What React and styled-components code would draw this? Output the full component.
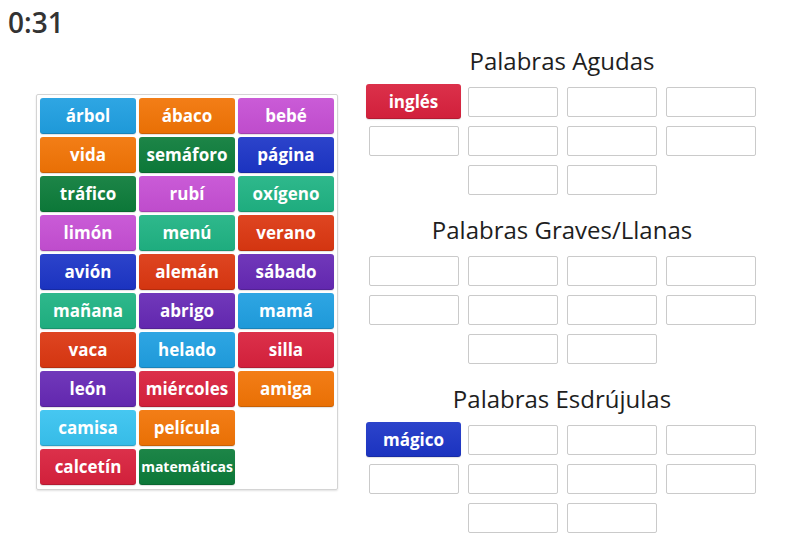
import React from "react";
import styled, { createGlobalStyle } from "styled-components";

const GlobalStyle = createGlobalStyle`
  html, body {
    margin: 0;
    padding: 0;
    background: #fff;
    font-family: "Open Sans", "Liberation Sans", sans-serif;
    color: #222;
  }
  * { box-sizing: border-box; }
`;

const palette = {
  sky: "#1f9fe1",
  orange: "#f27405",
  pink: "#c64fd4",
  green: "#0c7c3a",
  blue: "#1c35c7",
  teal: "#1fb383",
  rust: "#dc3711",
  purple: "#6629b5",
  red: "#d9213d",
  cyan: "#38c3f0",
};

const words = [
  ["árbol", "sky"], ["ábaco", "orange"], ["bebé", "pink"],
  ["vida", "orange"], ["semáforo", "green"], ["página", "blue"],
  ["tráfico", "green"], ["rubí", "pink"], ["oxígeno", "teal"],
  ["limón", "pink"], ["menú", "teal"], ["verano", "rust"],
  ["avión", "blue"], ["alemán", "rust"], ["sábado", "purple"],
  ["mañana", "teal"], ["abrigo", "purple"], ["mamá", "sky"],
  ["vaca", "rust"], ["helado", "sky"], ["silla", "red"],
  ["león", "purple"], ["miércoles", "red"], ["amiga", "orange"],
  ["camisa", "cyan"], ["película", "orange"],
  ["calcetín", "red"], ["matemáticas", "green"],
];

const groups = [
  { title: "Palabras Agudas", placed: { word: "inglés", color: "red" } },
  { title: "Palabras Graves/Llanas" },
  { title: "Palabras Esdrújulas", placed: { word: "mágico", color: "blue" } },
];

const Header = styled.header`
  padding: 8px 0 0 8px;
  height: 36px;
`;

const Timer = styled.div`
  font-size: 28px;
  line-height: 28px;
  font-weight: 600;
  color: #333;
`;

const Main = styled.main`
  display: flex;
  align-items: center;
  gap: 26px;
  padding: 10px 0 0 36px;
`;

const WordBank = styled.div`
  width: 302px;
  padding: 3px 3px 4px;
  border: 1px solid #d4d4d4;
  border-radius: 2px;
  box-shadow: 0 1px 2px rgba(0, 0, 0, 0.12);
  display: grid;
  grid-template-columns: repeat(3, 96px);
  grid-auto-rows: 36px;
  gap: 3px;
`;

const Tile = styled.div`
  display: flex;
  align-items: center;
  justify-content: center;
  border-radius: 3px;
  background-color: ${(p) => p.$color};
  background-image: linear-gradient(rgba(255, 255, 255, 0.07), rgba(0, 0, 0, 0.04));
  box-shadow: inset 0 -1px 0 rgba(0, 0, 0, 0.14), 0 1px 1px rgba(0, 0, 0, 0.12);
  color: #fff;
  font-weight: 700;
  font-size: ${(p) => (p.$small ? "14px" : "17px")};
  white-space: nowrap;
  grid-column: ${(p) => (p.$newRow ? "1" : "auto")};
`;

const PlacedTile = styled(Tile)`
  width: 95px;
  height: 35px;
`;

const Groups = styled.div`
  display: flex;
  flex-direction: column;
  gap: 16px;
`;

const Group = styled.section`
  width: 396px;
`;

const GroupTitle = styled.h2`
  margin: 0 0 6px;
  font-size: 24px;
  line-height: 30px;
  font-weight: 400;
  text-align: center;
  color: #1e1e1e;
`;

const Slots = styled.div`
  display: grid;
  grid-template-columns: repeat(4, 99px);
  grid-auto-rows: 39px;
`;

const Cell = styled.div`
  display: flex;
  align-items: center;
  justify-content: center;
  grid-column: ${(p) => p.$col || "auto"};
`;

const Slot = styled.div`
  width: 90px;
  height: 30px;
  border: 1px solid #cacaca;
  border-radius: 2px;
  background: #fff;
`;

function SlotGrid({ placed }) {
  const cells = Array.from({ length: 10 }, (_, i) => i);
  return (
    <Slots>
      {cells.map((i) => (
        <Cell key={i} $col={i === 8 ? 2 : undefined}>
          {i === 0 && placed ? (
            <PlacedTile $color={palette[placed.color]}>{placed.word}</PlacedTile>
          ) : (
            <Slot />
          )}
        </Cell>
      ))}
    </Slots>
  );
}

export default function App() {
  return (
    <>
      <GlobalStyle />
      <Header>
        <Timer>0:31</Timer>
      </Header>
      <Main>
        <WordBank>
          {words.map(([word, color]) => (
            <Tile
              key={word}
              $color={palette[color]}
              $small={word.length > 10}
              $newRow={word === "calcetín"}
            >
              {word}
            </Tile>
          ))}
        </WordBank>
        <Groups>
          {groups.map((g) => (
            <Group key={g.title}>
              <GroupTitle>{g.title}</GroupTitle>
              <SlotGrid placed={g.placed} />
            </Group>
          ))}
        </Groups>
      </Main>
    </>
  );
}
